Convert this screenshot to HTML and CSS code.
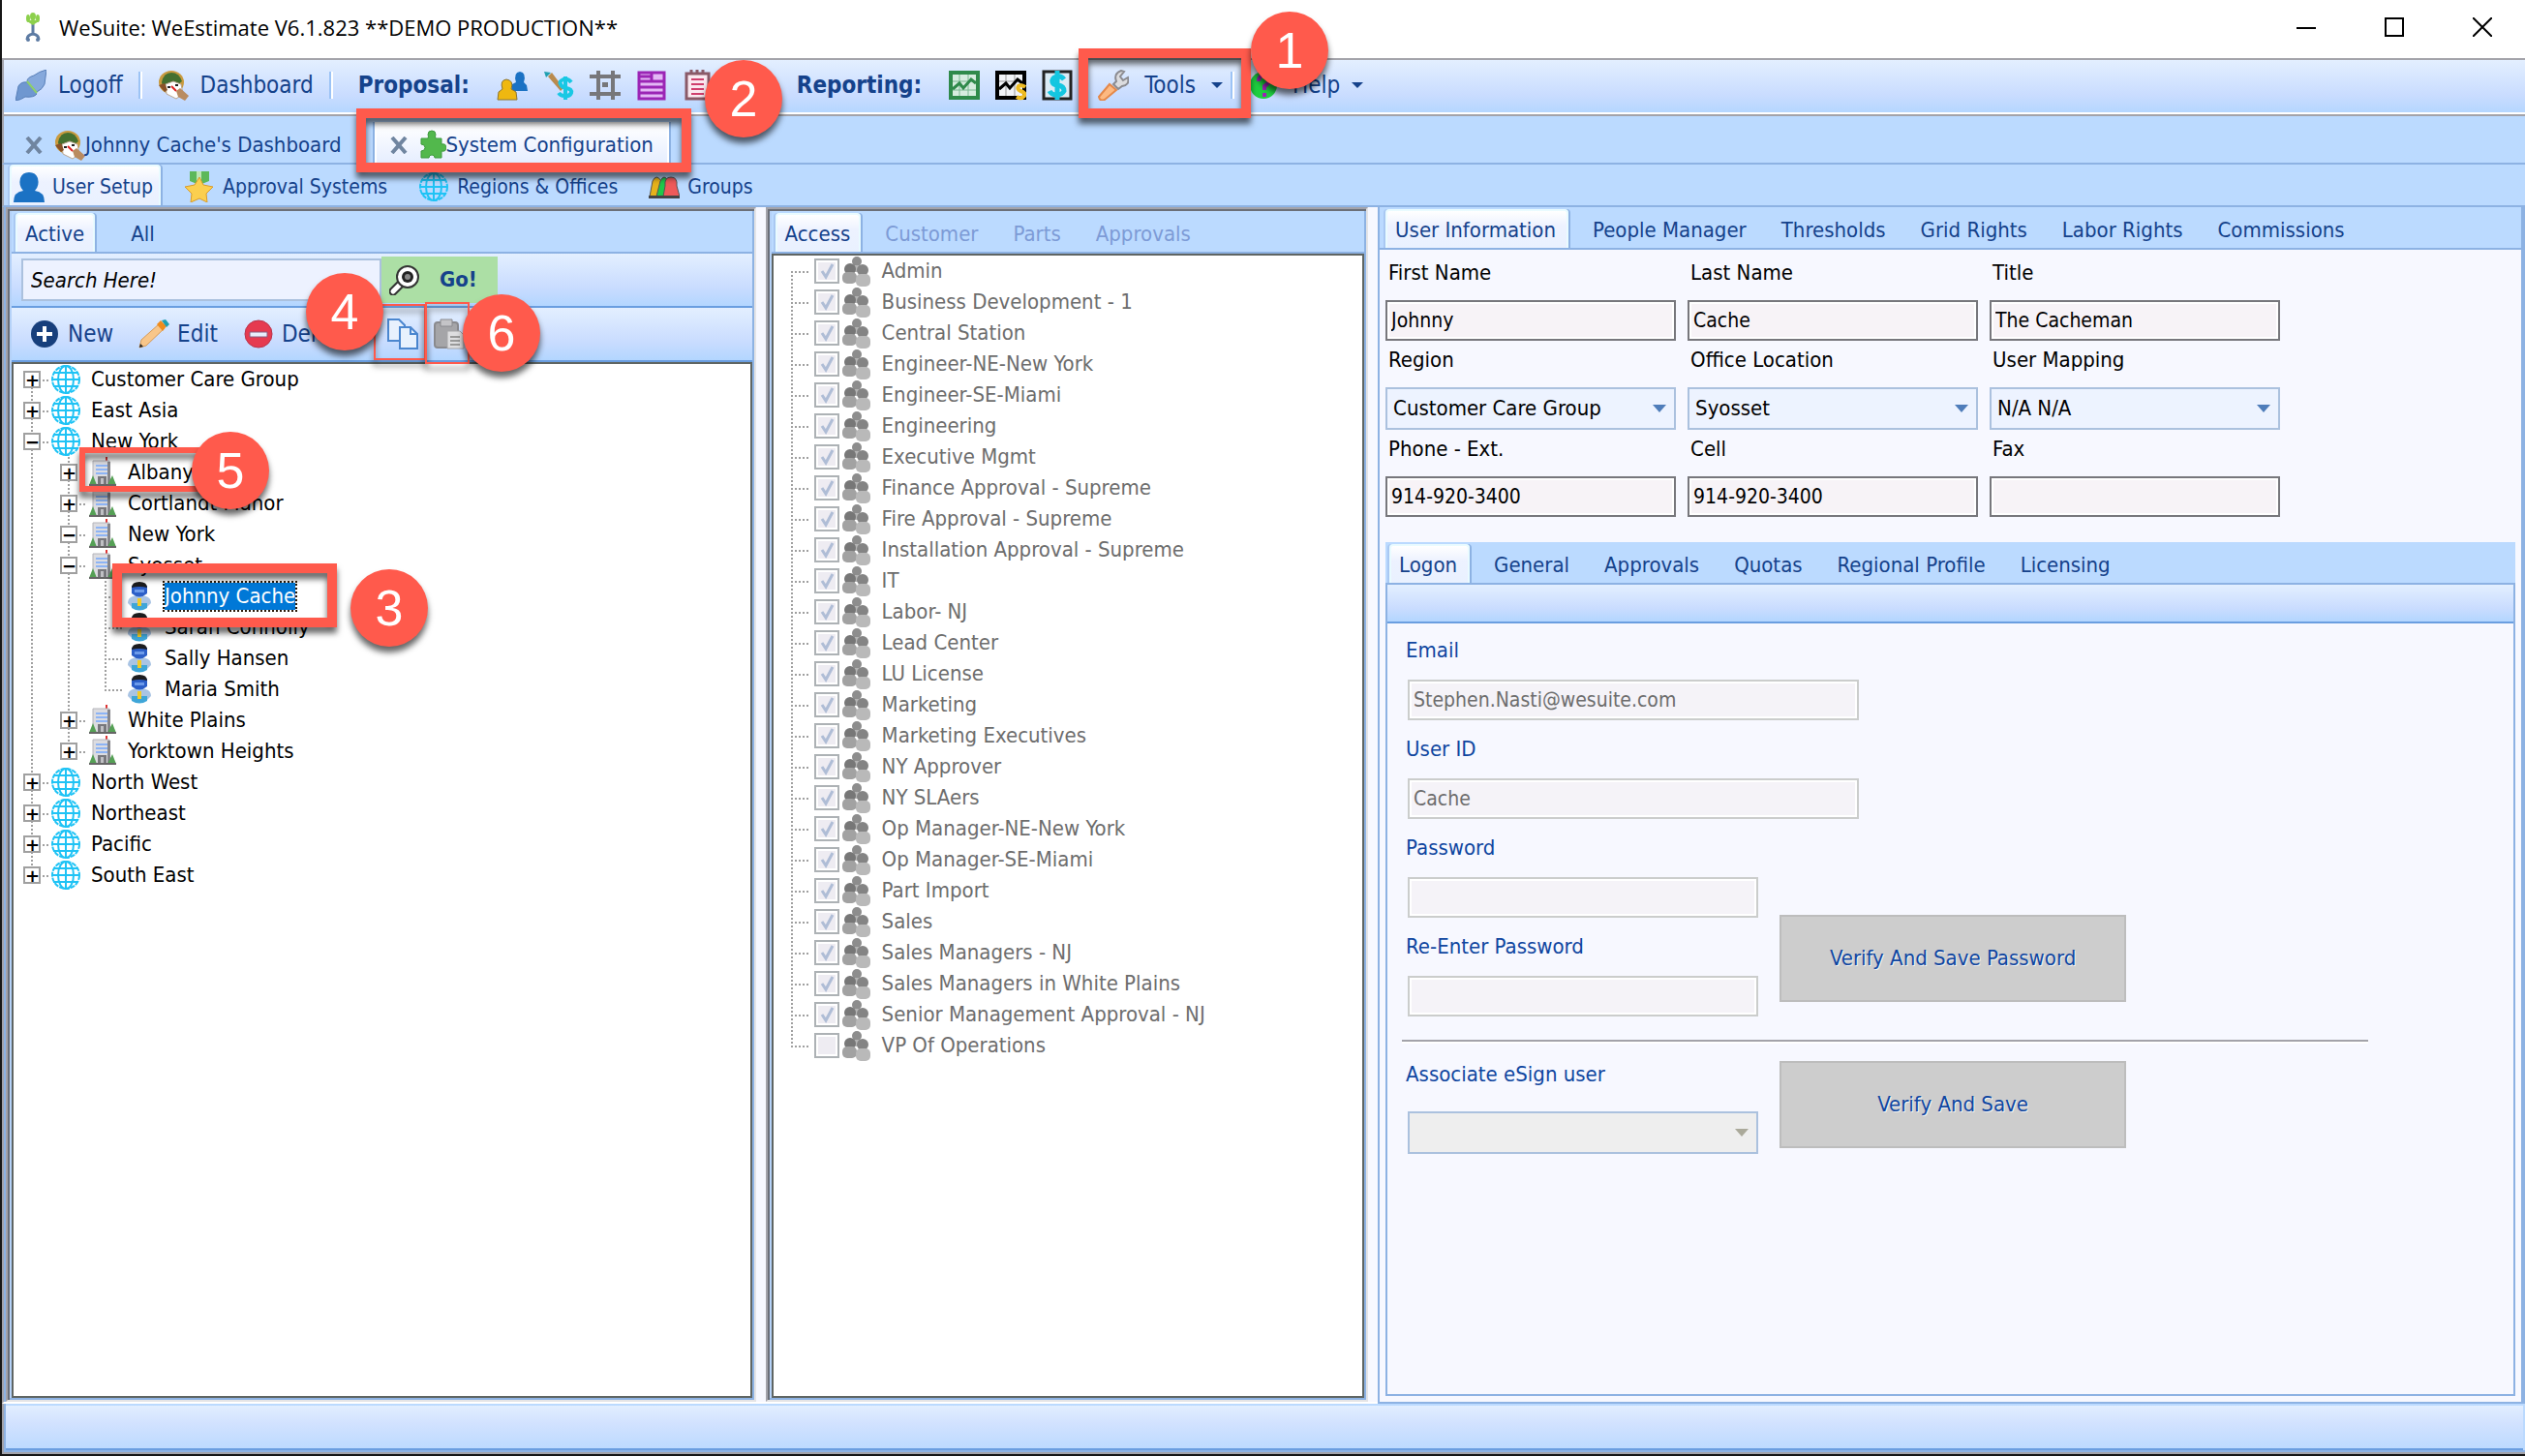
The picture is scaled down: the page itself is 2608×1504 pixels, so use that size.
FILE: index.html
```html
<!DOCTYPE html>
<html lang="en">
<head>
<meta charset="utf-8">
<title>WeSuite: WeEstimate</title>
<link rel="stylesheet" href="styles.css">
</head>
<body>
<svg class="sprite" aria-hidden="true">
  <symbol id="globe" viewBox="0 0 32 32"><g fill="none" stroke="#1fc3f5" stroke-width="2"><circle cx="16" cy="16" r="14" stroke-dasharray="5 1"/><ellipse cx="16" cy="16" rx="8" ry="14"/><path d="M16 2v28M3 9h26M2 16h28M3 23h26"/></g></symbol>
  <symbol id="building" viewBox="0 0 32 32"><path d="M19 0h2v4h-2z" fill="#d33"/><path d="M6 4h17v25H6z" fill="#dcdce0" stroke="#b4b4ba"/><path d="M21 5h3v24h-3z" fill="#85858a"/><path d="M9 8h12v2H9zm0 4h12v2H9zm0 4h12v2H9z" fill="#8db4f5"/><path d="M11 20h9v9h-9z" fill="#77777c"/><path d="M14 22h3v7h-3z" fill="#c0c0c4"/><path d="M2 29l4-10 4 10zM21 29l5-10 4 10z" fill="#55a055"/><path d="M2 28h28v2H2z" fill="#666"/></symbol>
  <symbol id="person" viewBox="0 0 32 32"><path d="M4 23q0-8 12-8t12 8l-4 4H8z" fill="#a9c4e4"/><path d="M8 23h16v5q-8 5-16 0z" fill="#3fa6d8"/><path d="M8 5h16v8q-8 7-16 0z" fill="#2c5fc8"/><path d="M8 7q0-6 8-6t8 6q-8-2-16 0z" fill="#1c1c1e"/><path d="M11 9h10v3H11z" fill="#6d9bea"/><path d="M14 18h4v8h-4z" fill="#f3cb27"/></symbol>
  <symbol id="group" viewBox="0 0 32 32"><circle cx="16" cy="6" r="5" fill="#8d8d8d"/><path d="M10 10h12v7H10z" fill="#b4b4b4"/><circle cx="9" cy="14" r="6" fill="#777"/><circle cx="22" cy="15" r="6" fill="#848484"/><rect x="1" y="17" width="15" height="12" rx="5" fill="#a2a2a2"/><rect x="15" y="19" width="15" height="13" rx="5" fill="#b9b9b9"/></symbol>
  <symbol id="mascot" viewBox="0 0 32 32"><ellipse cx="14" cy="13" rx="13" ry="12" fill="#c99a3e"/><path d="M4 13Q6 3 14 3t11 9l-4 3-16 2z" fill="#44702f"/><path d="M8 15l8-3 8 3 2 10-7 5-10-5z" fill="#fff" stroke="#b9a58f"/><path d="M1 16l6-2 3 7-3 2z" fill="#8a5228"/><path d="M19 22l4-3 9 8-4 5-7-4z" fill="#b98b60"/><path d="M14 17l5 5" stroke="#d22" stroke-width="2"/><path d="M10 18h3M18 16h3" stroke="#222" stroke-width="2"/></symbol>
</svg>

<header class="titlebar">
  <svg class="ico" viewBox="0 0 32 32"><path d="M16 13v11M10 29q0-5 6-6 6 1 6 6" fill="none" stroke="#5d7ba3" stroke-width="3"/><circle cx="11" cy="29" r="2" fill="#5d7ba3"/><circle cx="21" cy="29" r="2" fill="#5d7ba3"/><g fill="#8cd04c"><ellipse cx="11" cy="7" rx="2" ry="4"/><ellipse cx="21" cy="7" rx="2" ry="4"/><ellipse cx="16" cy="5" rx="3" ry="4"/><path d="M10 10l6 4 6-4-6-2z"/></g></svg>
  <h1>WeSuite: WeEstimate V6.1.823 **DEMO PRODUCTION**</h1>
  <div class="winbtns">
    <button aria-label="Minimize"><svg viewBox="0 0 20 20"><path d="M0 11h20" stroke="#000" stroke-width="2"/></svg></button>
    <button aria-label="Maximize"><svg viewBox="0 0 20 20"><path d="M1 1h18v18H1z" fill="none" stroke="#000" stroke-width="2"/></svg></button>
    <button aria-label="Close"><svg viewBox="0 0 20 20"><path d="M0 0l20 20M20 0L0 20" stroke="#000" stroke-width="2"/></svg></button>
  </div>
</header>

<nav class="toolbar">
  <button class="tool"><svg class="ico" viewBox="0 0 32 32"><path d="M0 32l3-15q3-5 9-4l10 12q-3 4-12 3-4 3-10 4z" fill="#6f97d0" stroke="#587fb8"/><path d="M12 12q0-4 7-6 5-4 13-6l-2 15q-2 5-8 8z" fill="#86a9dc" stroke="#587fb8"/><path d="M12 12l10 12" stroke="#8fd06a" stroke-width="2"/></svg>Logoff</button>
  <i class="sep"></i>
  <button class="tool"><svg class="ico"><use href="#mascot"/></svg>Dashboard</button>
  <i class="sep"></i>
  <b class="tool-title">Proposal:</b>
  <div class="icons">
    <button aria-label="Customers"><svg class="ico" viewBox="0 0 32 32"><path d="M15 22l1-7 4-2q-3-10 4-11 7 1 4 11l3 3 1 6z" fill="#1b72c4"/><path d="M1 31l1-8 4-3q-3-9 4-10 8 1 5 10l5 3 1 8z" fill="#efb810" stroke="#8c7430"/></svg></button>
    <button aria-label="Pricing"><svg class="ico" viewBox="0 0 32 32"><path d="M1 2l7 1-5 5z" fill="#1f9fb0"/><path d="M5 7l4-4 12 16-3 3z" fill="#b98b4e"/><path d="M29 13q-3-4-8-3-5 2-3 5 1 3 6 4 6 1 5 5-2 4-7 3-4 0-6-3M23 7v24" fill="none" stroke="#19c8e4" stroke-width="4"/></svg></button>
    <button aria-label="Grid"><svg class="ico" viewBox="0 0 32 32"><path d="M9 1v30M24 1v30M0 7h32M0 25h32" stroke="#77777a" stroke-width="4"/><path d="M13 13h6v5h-6z" fill="#77777a"/></svg></button>
    <button aria-label="Form"><svg class="ico" viewBox="0 0 32 32"><path d="M3 3h26v27H3z" fill="#e3b8f5" stroke="#9b25b5" stroke-width="3"/><path d="M3 12h26M3 18h26M3 24h26M16 3v9M3 7h13" stroke="#9b25b5" stroke-width="3"/></svg></button>
    <button aria-label="Notes"><svg class="ico" viewBox="0 0 32 32"><path d="M4 4h23v26H4z" fill="#fbe9f0" stroke="#8a5a68" stroke-width="3"/><path d="M9 0v5M15 0v5M21 0v5" stroke="#8a5a68" stroke-width="3"/><path d="M9 10h13M9 15h13M9 20h13M9 25h13" stroke="#cf3f6d" stroke-width="2"/></svg></button>
  </div>
  <b class="tool-title reporting">Reporting:</b>
  <div class="icons">
    <button aria-label="Chart"><svg class="ico" viewBox="0 0 32 32"><path d="M2 3h28v26H2z" fill="#d6ecdf" stroke="#2f8a4a" stroke-width="4"/><path d="M4 12h24M4 21h24M11 5v22M20 5v22" stroke="#7cb892"/><path d="M4 20l7-6 4 5 8-9 5 4" fill="none" stroke="#2f8a4a" stroke-width="3"/></svg></button>
    <button aria-label="Sales chart"><svg class="ico" viewBox="0 0 32 32"><path d="M2 3h28v26H2z" fill="#f2f4f8" stroke="#000" stroke-width="4"/><path d="M4 12h24M11 5v22M20 5v22" stroke="#999"/><path d="M4 20l7-6 4 5 8-9 5 4" fill="none" stroke="#000" stroke-width="3"/><path d="M31 18q-4-3-7-1-2 3 2 5 6 2 4 5-3 4-8 1" fill="none" stroke="#eebb22" stroke-width="4"/></svg></button>
    <button aria-label="Revenue"><svg class="ico" viewBox="0 0 32 32"><path d="M2 2h28v28H2z" fill="#dcebf5" stroke="#222" stroke-width="3"/><path d="M23 10q-3-4-8-3-5 2-4 6 1 3 6 3 6 1 6 6-2 4-8 4-5 0-7-4M16 1v30" fill="none" stroke="#14c6e0" stroke-width="5"/></svg></button>
  </div>
  <button class="tool tools"><svg class="ico" viewBox="0 0 32 32"><path d="M16 15l3-3q-3-8 5-11l3 1-4 5 3 4 5-3q2 8-6 9l-4 3z" fill="#dcdcde" stroke="#8b8b90" stroke-width="2"/><path d="M1 28l11-13 7 6-12 10q-5 2-6-3z" fill="#fdb982" stroke="#e4884a" stroke-width="2"/></svg>Tools<i class="arrow"></i></button>
  <i class="sep narrow"></i>
  <button class="tool"><svg class="ico" viewBox="0 0 32 32"><circle cx="14" cy="16" r="14" fill="#1fd040"/><path d="M9 12q0-6 6-6t5 5q-1 4-5 6v4" fill="none" stroke="#9b25b5" stroke-width="4"/><path d="M13 24h4v4h-4z" fill="#9b25b5"/></svg>Help<i class="arrow"></i></button>
</nav>

<nav class="doc-tabs">
  <a class="doc-tab" href="#"><svg class="x" viewBox="0 0 18 18"><path d="M2 1l14 16M16 1L2 17" stroke="#7085a0" stroke-width="4"/></svg><svg class="ico"><use href="#mascot"/></svg>Johnny Cache's Dashboard</a>
  <a class="doc-tab on" href="#"><svg class="x" viewBox="0 0 18 18"><path d="M2 1l14 16M16 1L2 17" stroke="#7085a0" stroke-width="4"/></svg><svg class="ico small" viewBox="0 0 28 32"><path d="M2 9h7q1-2 0-4 0-4 4-4t4 4q-1 2 0 4h6v6q5-1 5 3.500t-5 3.500v7h-7q0-3-3-3t-3 3H2v-7q4 0 4-3.500T2 15z" fill="#52b84c" stroke="#3d9a3c"/></svg>System Configuration</a>
</nav>

<nav class="section-tabs">
  <a class="sec on" href="#"><svg class="ico" viewBox="0 0 32 32"><path d="M0 32q0-11 10-12-5-5-3-13 2-6 9-6t9 6q2 8-3 13 10 1 10 12z" fill="#1b72c4"/></svg>User Setup</a>
  <a class="sec" href="#"><svg class="ico" viewBox="0 0 32 32"><path d="M6 0h20v10l-10 4-10-4z" fill="#5cb85a"/><path d="M13 0h5v10h-5z" fill="#bce6b4"/><path d="M16 6l4 8 10 2-7 7 1 9-8-4-9 4 1-9-7-7 10-2z" fill="#fbcf4f" stroke="#d99b2a"/></svg>Approval Systems</a>
  <a class="sec" href="#"><svg class="ico"><use href="#globe"/></svg>Regions &amp; Offices</a>
  <a class="sec" href="#"><svg class="ico" viewBox="0 0 32 32"><path d="M1 26L4 10q4-8 9 0l3 16z" fill="#e6b21a" stroke="#555"/><path d="M8 26l4-16q4-8 8 0l3 16z" fill="#1fc84a" stroke="#555"/><path d="M15 26l2-11q-1-9 6-9t6 9l3 11z" fill="#ee5a5a" stroke="#555"/><path d="M0 25h32v3H0z" fill="#444"/></svg>Groups</a>
</nav>

<main class="work">
  <section class="pane">
    <nav class="tabs people"><a class="tab on" href="#">Active</a><a class="tab" href="#">All</a></nav>
    <form class="bar search">
      <input class="find" type="text" aria-label="Search" value="Search Here!">
      <button type="button" class="go"><svg class="ico" viewBox="0 0 32 32"><path d="M12 20l-8 8" stroke="#333" stroke-width="9" stroke-linecap="round"/><path d="M12 20l-8 8" stroke="#fff" stroke-width="5" stroke-linecap="round"/><circle cx="19" cy="13" r="11" fill="#fff" stroke="#333" stroke-width="2"/><circle cx="19" cy="13" r="6" fill="#222"/><circle cx="19" cy="13" r="3" fill="#888"/></svg>Go!</button>
    </form>
    <div class="bar edit">
      <button class="act"><svg class="ico" viewBox="0 0 32 32"><circle cx="16" cy="16" r="14" fill="#173f7c"/><path d="M16 8v16M8 16h16" stroke="#fff" stroke-width="4"/></svg>New</button>
      <button class="act"><svg class="ico" viewBox="0 0 32 32"><path d="M1 30l2-8L22 5l5 5L8 28z" fill="#f8c68a" stroke="#d79a55"/><path d="M19 6l4-4 6 6-4 5z" fill="#f08c1c"/><path d="M24 2l4-1 4 5-3 3z" fill="#1f9fb0"/><path d="M1 30l1-4 3 3z" fill="#222"/></svg>Edit</button>
      <button class="act"><svg class="ico" viewBox="0 0 32 32"><circle cx="16" cy="16" r="14" fill="#e63a50" stroke="#b8324a"/><path d="M7 14h18v5H7z" fill="#e8eefc" stroke="#8a5a7c"/></svg>Delete</button>
      <button class="clip copy" aria-label="Copy"><svg class="ico" viewBox="0 0 32 32"><g fill="#e8f1fd" stroke="#4b86cf" stroke-width="2"><path d="M1 1h11l6 6v16H1z"/><path d="M13 9h11l7 7v15H13z"/></g><path d="M24 9v7h7" fill="none" stroke="#4b86cf" stroke-width="2"/></svg></button>
      <button class="clip" aria-label="Paste"><svg class="ico" viewBox="0 0 32 32"><rect x="1" y="4" width="24" height="26" rx="3" fill="#a5a5a8" stroke="#8a8a8e" stroke-width="2"/><path d="M7 1h12v7H7z" fill="#c4c4c7" stroke="#8a8a8e"/><path d="M14 13h13l4 4v14H14z" fill="#dedee0" stroke="#a5a5a8"/><path d="M17 19h10M17 23h10M17 27h10" stroke="#999" stroke-width="2"/></svg></button>
    </div>
    <ul class="tree list">
      <li><i class="node top"><button>+</button></i><svg class="ico"><use href="#globe"/></svg>Customer Care Group</li>
      <li><i class="node"><button>+</button></i><svg class="ico"><use href="#globe"/></svg>East Asia</li>
      <li><i class="node"><button>−</button></i><svg class="ico"><use href="#globe"/></svg>New York</li>
      <li><i class="rail"></i><i class="node"><button>+</button></i><svg class="ico"><use href="#building"/></svg>Albany</li>
      <li><i class="rail"></i><i class="node"><button>+</button></i><svg class="ico"><use href="#building"/></svg>Cortlandt Manor</li>
      <li><i class="rail"></i><i class="node"><button>−</button></i><svg class="ico"><use href="#building"/></svg>New York</li>
      <li><i class="rail"></i><i class="node"><button>−</button></i><svg class="ico"><use href="#building"/></svg>Syosset</li>
      <li><i class="rail"></i><i class="rail"></i><i class="node"></i><svg class="ico"><use href="#person"/></svg><span class="picked">Johnny Cache</span></li>
      <li><i class="rail"></i><i class="rail"></i><i class="node"></i><svg class="ico"><use href="#person"/></svg>Sarah Connolly</li>
      <li><i class="rail"></i><i class="rail"></i><i class="node"></i><svg class="ico"><use href="#person"/></svg>Sally Hansen</li>
      <li><i class="rail"></i><i class="rail"></i><i class="node end"></i><svg class="ico"><use href="#person"/></svg>Maria Smith</li>
      <li><i class="rail"></i><i class="node"><button>+</button></i><svg class="ico"><use href="#building"/></svg>White Plains</li>
      <li><i class="rail"></i><i class="node end"><button>+</button></i><svg class="ico"><use href="#building"/></svg>Yorktown Heights</li>
      <li><i class="node"><button>+</button></i><svg class="ico"><use href="#globe"/></svg>North West</li>
      <li><i class="node"><button>+</button></i><svg class="ico"><use href="#globe"/></svg>Northeast</li>
      <li><i class="node"><button>+</button></i><svg class="ico"><use href="#globe"/></svg>Pacific</li>
      <li><i class="node end"><button>+</button></i><svg class="ico"><use href="#globe"/></svg>South East</li>
    </ul>
  </section>

  <section class="pane">
    <nav class="tabs access"><a class="tab on" href="#">Access</a><a class="tab off" href="#">Customer</a><a class="tab off" href="#">Parts</a><a class="tab off" href="#">Approvals</a></nav>
    <ul class="roles list">
      <li><i class="node top"></i><label><input type="checkbox" checked disabled><svg class="ico"><use href="#group"/></svg>Admin</label></li>
      <li><i class="node"></i><label><input type="checkbox" checked disabled><svg class="ico"><use href="#group"/></svg>Business Development - 1</label></li>
      <li><i class="node"></i><label><input type="checkbox" checked disabled><svg class="ico"><use href="#group"/></svg>Central Station</label></li>
      <li><i class="node"></i><label><input type="checkbox" checked disabled><svg class="ico"><use href="#group"/></svg>Engineer-NE-New York</label></li>
      <li><i class="node"></i><label><input type="checkbox" checked disabled><svg class="ico"><use href="#group"/></svg>Engineer-SE-Miami</label></li>
      <li><i class="node"></i><label><input type="checkbox" checked disabled><svg class="ico"><use href="#group"/></svg>Engineering</label></li>
      <li><i class="node"></i><label><input type="checkbox" checked disabled><svg class="ico"><use href="#group"/></svg>Executive Mgmt</label></li>
      <li><i class="node"></i><label><input type="checkbox" checked disabled><svg class="ico"><use href="#group"/></svg>Finance Approval - Supreme</label></li>
      <li><i class="node"></i><label><input type="checkbox" checked disabled><svg class="ico"><use href="#group"/></svg>Fire Approval - Supreme</label></li>
      <li><i class="node"></i><label><input type="checkbox" checked disabled><svg class="ico"><use href="#group"/></svg>Installation Approval - Supreme</label></li>
      <li><i class="node"></i><label><input type="checkbox" checked disabled><svg class="ico"><use href="#group"/></svg>IT</label></li>
      <li><i class="node"></i><label><input type="checkbox" checked disabled><svg class="ico"><use href="#group"/></svg>Labor- NJ</label></li>
      <li><i class="node"></i><label><input type="checkbox" checked disabled><svg class="ico"><use href="#group"/></svg>Lead Center</label></li>
      <li><i class="node"></i><label><input type="checkbox" checked disabled><svg class="ico"><use href="#group"/></svg>LU License</label></li>
      <li><i class="node"></i><label><input type="checkbox" checked disabled><svg class="ico"><use href="#group"/></svg>Marketing</label></li>
      <li><i class="node"></i><label><input type="checkbox" checked disabled><svg class="ico"><use href="#group"/></svg>Marketing Executives</label></li>
      <li><i class="node"></i><label><input type="checkbox" checked disabled><svg class="ico"><use href="#group"/></svg>NY Approver</label></li>
      <li><i class="node"></i><label><input type="checkbox" checked disabled><svg class="ico"><use href="#group"/></svg>NY SLAers</label></li>
      <li><i class="node"></i><label><input type="checkbox" checked disabled><svg class="ico"><use href="#group"/></svg>Op Manager-NE-New York</label></li>
      <li><i class="node"></i><label><input type="checkbox" checked disabled><svg class="ico"><use href="#group"/></svg>Op Manager-SE-Miami</label></li>
      <li><i class="node"></i><label><input type="checkbox" checked disabled><svg class="ico"><use href="#group"/></svg>Part Import</label></li>
      <li><i class="node"></i><label><input type="checkbox" checked disabled><svg class="ico"><use href="#group"/></svg>Sales</label></li>
      <li><i class="node"></i><label><input type="checkbox" checked disabled><svg class="ico"><use href="#group"/></svg>Sales Managers - NJ</label></li>
      <li><i class="node"></i><label><input type="checkbox" checked disabled><svg class="ico"><use href="#group"/></svg>Sales Managers in White Plains</label></li>
      <li><i class="node"></i><label><input type="checkbox" checked disabled><svg class="ico"><use href="#group"/></svg>Senior Management Approval - NJ</label></li>
      <li><i class="node end"></i><label><input type="checkbox" disabled><svg class="ico"><use href="#group"/></svg>VP Of Operations</label></li>
    </ul>
  </section>

  <section class="detail">
    <nav class="tabs info"><a class="tab on" href="#">User Information</a><a class="tab" href="#">People Manager</a><a class="tab" href="#">Thresholds</a><a class="tab" href="#">Grid Rights</a><a class="tab" href="#">Labor Rights</a><a class="tab" href="#">Commissions</a></nav>
    <form class="fields">
      <div class="field"><label for="first">First Name</label><input id="first" type="text" value="Johnny"></div>
      <div class="field"><label for="last">Last Name</label><input id="last" type="text" value="Cache"></div>
      <div class="field"><label for="title">Title</label><input id="title" type="text" value="The Cacheman"></div>
      <div class="field"><label for="region">Region</label><select id="region"><option>Customer Care Group</option></select></div>
      <div class="field"><label for="office">Office Location</label><select id="office"><option>Syosset</option></select></div>
      <div class="field"><label for="map">User Mapping</label><select id="map"><option>N/A N/A</option></select></div>
      <div class="field"><label for="phone">Phone - Ext.</label><input id="phone" type="text" value="914-920-3400"></div>
      <div class="field"><label for="cell">Cell</label><input id="cell" type="text" value="914-920-3400"></div>
      <div class="field"><label for="fax">Fax</label><input id="fax" type="text"></div>
    </form>
    <section class="account">
      <nav class="tabs info"><a class="tab on" href="#">Logon</a><a class="tab" href="#">General</a><a class="tab" href="#">Approvals</a><a class="tab" href="#">Quotas</a><a class="tab" href="#">Regional Profile</a><a class="tab" href="#">Licensing</a></nav>
      <div class="account-body">
        <div class="bar blank"></div>
        <form class="logon">
          <div class="field wide"><label for="email">Email</label><input id="email" type="text" value="Stephen.Nasti@wesuite.com" disabled></div>
          <div class="field wide"><label for="uid">User ID</label><input id="uid" type="text" value="Cache" disabled></div>
          <div class="pair">
            <div class="col">
              <div class="field"><label for="pw">Password</label><input id="pw" type="password" disabled></div>
              <div class="field"><label for="pw2">Re-Enter Password</label><input id="pw2" type="password" disabled></div>
            </div>
            <button type="button" class="verify low">Verify And Save Password</button>
          </div>
          <hr>
          <div class="pair">
            <div class="col"><div class="field esign"><label for="esign">Associate eSign user</label><select id="esign" disabled><option></option></select></div></div>
            <button type="button" class="verify">Verify And Save</button>
          </div>
        </form>
      </div>
    </section>
  </section>
</main>

<footer class="status"></footer>

<div class="box b1"></div><div class="box b2"></div><div class="box b3"></div>
<div class="box thin b4"></div><div class="box thin b6"></div><div class="box mid b5"></div>
<div class="dot d1">1</div><div class="dot d2">2</div><div class="dot d3">3</div>
<div class="dot d4">4</div><div class="dot d5">5</div><div class="dot d6">6</div>
</body>
</html>
```

FILE: styles.css
```css
:root {
  --ink: #15428b;
  --line: #8db2e3;
  --strip: #bbdaff;
  --edge: #5f6563;
  --grey: #a3a3aa;
  --pale: #f7f8ff;
  --mark: #ff5a4c;
  --bar: linear-gradient(#e3efff, #c9dcff 65%, #b3d6ff);
}
* { box-sizing: border-box; }
body {
  margin: 0;
  min-height: 100vh;
  position: relative;
  display: flex;
  flex-direction: column;
  border-left: 2px solid #161616;
  border-bottom: 2px solid #161616;
  background: #fff;
  color: #000;
  font: 22px/28px "DejaVu Sans Condensed", "DejaVu Sans", sans-serif;
}
button, input, select { font: inherit; color: inherit; margin: 0; }
button { background: none; border: 0; padding: 0; }
a { color: inherit; text-decoration: none; }
i { font-style: normal; }
.sprite { position: absolute; width: 0; height: 0; }
.ico { width: 32px; height: 32px; flex: none; display: block; }

.titlebar { height: 60px; display: flex; align-items: center; padding: 0 34px 4px 16px; gap: 11px; }
.titlebar h1 { margin: 0; flex: 1; font: 22px/32px "Open Sans", sans-serif; }
.winbtns { display: flex; gap: 71px; }
.winbtns svg { display: block; width: 20px; height: 20px; }

.toolbar {
  height: 60px;
  display: flex;
  align-items: center;
  padding: 0 12px 4px;
  border-top: 2px solid var(--grey);
  border-left: 2px solid var(--grey);
  border-bottom: 2px solid var(--grey);
  background: linear-gradient(#fff, #fff) bottom / 100% 2px no-repeat, var(--bar);
  color: var(--ink);
  font-size: 24px;
}
.tool { display: flex; align-items: center; gap: 12px; }
.sep { width: 4px; height: 28px; margin: 0 16px; border-left: 2px solid #9cc3f5; border-right: 2px solid #fff; }
.sep.narrow { margin: 0 16px 0 8px; }
.tool-title { margin: 0 28px 0 10px; }
.tool-title.reporting { margin-left: 86px; }
.icons { display: flex; gap: 16px; }
.tools { margin-left: 26px; gap: 16px; }
.arrow { border: 6px solid transparent; border-top-color: var(--ink); border-bottom: 0; }

.doc-tabs, .section-tabs {
  display: flex;
  background: var(--strip);
  border-left: 2px solid var(--grey);
  border-bottom: 2px solid var(--line);
  color: var(--ink);
}
.doc-tabs { height: 50px; padding: 6px 0 0 8px; gap: 20px; }
.doc-tab { display: flex; align-items: center; padding: 6px 14px 0; height: 42px; }
.doc-tab.on { padding-top: 4px; background: linear-gradient(#fff, #e6eeff); border: 2px solid #fff; border-bottom: 0; box-shadow: 2px 0 0 var(--line), -2px 0 0 var(--line); }
.doc-tab .x { width: 18px; height: 18px; margin-right: 12px; }
.ico.small { width: 28px; }
.section-tabs { height: 44px; padding-left: 6px; font-size: 21px; gap: 24px; }
.sec { display: flex; align-items: center; gap: 8px; padding: 4px 8px 0 0; }
.sec.on, .tab.on {
  background: linear-gradient(#fff, #edf2ff 40%, #e9f1ff);
  border: 2px solid #e9fbff;
  border-bottom: 0;
  border-radius: 4px 4px 0 0;
  box-shadow: 2px 0 0 var(--line), -2px 0 0 #a9c8f2;
}
.sec.on { padding: 2px 6px 0 2px; }

.work {
  flex: 1;
  display: grid;
  grid-template-columns: 774fr 622fr 1184fr;
  gap: 10px;
  background: var(--pale);
  border-left: 2px solid var(--grey);
  box-shadow: inset 2px 0 0 var(--line);
  border-bottom: 2px solid #fff;
  padding-left: 2px;
}
.pane {
  display: flex;
  flex-direction: column;
  border: 2px solid var(--grey);
  border-right-color: #e4e4e6;
  border-bottom-color: #e4e4e6;
  box-shadow: inset 2px 2px 0 #6b6f78, inset -2px -2px 0 var(--line);
  padding: 2px 2px 2px 4px;
  background: #b5d2f8;
}
.tabs {
  display: flex;
  height: 44px;
  padding: 2px 4px 0;
  background: var(--strip);
  border-bottom: 2px solid var(--line);
  color: var(--ink);
}
.tab { padding: 8px 18px 0; }
.tab.on { padding: 6px 9px 0 8px; margin-right: 7px; }
.people .tab:nth-child(2) { padding-left: 30px; }
.access .tab:nth-child(2) { padding-left: 18px; }
.tab.off { color: #7d9bd6; }
.bar { background: var(--bar); border-bottom: 2px solid #6a9ee0; color: var(--ink); display: flex; }
.search { height: 56px; padding: 4px 10px; align-items: center; }
.find { width: 372px; height: 44px; padding: 0 8px; border: 2px solid #abc1de; background: #edf2ff; color: #000; font-style: italic; }
.go { display: flex; align-items: center; gap: 20px; width: 120px; height: 48px; padding-left: 8px; background: #acdfa5; font-weight: bold; }
.edit { height: 56px; padding-left: 18px; align-items: center; font-size: 24px; }
.act { display: flex; align-items: center; gap: 8px; margin-right: 26px; }
.clip { margin-right: 16px; }
.copy { margin-left: 12px; }

.list { list-style: none; margin: 0; padding: 0 0 0 10px; flex: 1; border: 2px solid var(--edge); background: #fff; }
.list li, .list label { display: flex; align-items: center; height: 32px; white-space: nowrap; }
.list .ico { margin-right: 10px; }
.node, .rail {
  --v: repeating-linear-gradient(#a0a0a0 0 2px, #fff 2px 4px);
  --h: repeating-linear-gradient(90deg, #a0a0a0 0 2px, #fff 2px 4px);
  flex: none;
  height: 32px;
  display: flex;
  align-items: center;
}
.rail { width: 38px; background: var(--v) 8px 0 / 2px 32px no-repeat; }
.node { width: 28px; background: var(--v) 8px 0 / 2px 32px no-repeat, var(--h) 8px 16px / 18px 2px no-repeat; }
.node.top { background: var(--v) 8px 16px / 2px 16px no-repeat, var(--h) 8px 16px / 18px 2px no-repeat; }
.node.end { background: var(--v) 8px 0 / 2px 16px no-repeat, var(--h) 8px 16px / 18px 2px no-repeat; }
.node button { width: 18px; height: 18px; border: 2px solid #a0a0a0; background: #fff; color: #000; font: bold 18px/13px "DejaVu Sans", sans-serif; overflow: hidden; }
.picked { background: #0078d7; color: #fff; outline: 2px dotted #2b1a08; line-height: 28px; }
.roles { color: #6d6d6d; }
.roles .node { width: 32px; }
.roles input {
  appearance: none;
  width: 26px;
  height: 26px;
  margin-right: 2px;
  border: 2px solid #adb2b5;
  background: #eeecf2;
  box-shadow: inset 0 0 0 2px #fff;
}
.roles input:checked { background: #eeecf2 url("data:image/svg+xml,%3Csvg xmlns='http://www.w3.org/2000/svg' viewBox='0 0 22 22'%3E%3Cpath d='M6 11l4 6 7-13' fill='none' stroke='%23afbdd6' stroke-width='3'/%3E%3C/svg%3E"); }

.detail { display: flex; flex-direction: column; border: solid var(--line); border-width: 0 4px 2px 2px; margin-bottom: -2px; }
.detail .tabs { padding-left: 6px; }
.info .tab.on { padding: 6px 11px 0 8px; }
.info .tab:nth-child(2) { padding-left: 18px; }
.fields { display: grid; grid-template-columns: repeat(3, 300px); gap: 6px 12px; padding: 10px 6px 26px; }
.field { display: flex; flex-direction: column; gap: 14px; }
.field label { padding-left: 3px; }
.field input, .field select { height: 44px; width: 100%; border: 2px solid #77777c; font-size: 21px; padding: 0 4px; border-radius: 0; }
.field input { height: 42px; background: #f7f3f7; box-shadow: inset 0 0 0 2px #fff; }
.field select {
  appearance: none;
  padding: 0 6px;
  font-size: 22px;
  border-color: #abc1de;
  background: #edf3ff url("data:image/svg+xml,%3Csvg xmlns='http://www.w3.org/2000/svg' viewBox='0 0 14 8'%3E%3Cpath d='M0 0h14L7 8z' fill='%234f7dba'/%3E%3C/svg%3E") right 8px center / 14px 8px no-repeat;
}
.account { flex: 1; display: flex; flex-direction: column; margin: 0 6px 6px; }
.account .tabs { padding-left: 4px; }
.account-body { flex: 1; border: 2px solid var(--line); border-top: 0; }
.blank { height: 40px; }
.logon { padding: 14px 21px; color: var(--ink); }
.logon .field { gap: 16px; margin-bottom: 16px; }
.logon .field label { margin-left: -5px; color: #0f46a0; }
.logon .field input { border-color: #cbcdcc; background: #f5f3f8; color: #6d6d6d; }
.field.wide { max-width: 466px; }
.pair { display: flex; gap: 22px; align-items: flex-start; }
.col { width: 362px; }
.verify { width: 358px; height: 90px; border: 2px solid #bdbdbd; background: #cdcdcd; color: #0f46a0; text-shadow: 1px 1px 0 #f4f4f4; }
.verify.low { margin-top: 83px; }
.logon hr { height: 4px; max-width: 998px; margin: 8px 0 18px -6px; border: 0; border-top: 2px solid var(--grey); background: #fff; }
.logon .esign { gap: 24px; }
.logon .esign select { opacity: 1; background-color: #eee; background-image: url("data:image/svg+xml,%3Csvg xmlns='http://www.w3.org/2000/svg' viewBox='0 0 14 8'%3E%3Cpath d='M0 0h14L7 8z' fill='%23aaa99a'/%3E%3C/svg%3E"); }

.status {
  height: 52px;
  border-left: 2px solid var(--grey);
  border-bottom: 2px solid var(--grey);
  background: linear-gradient(#e3efff, #d2e2ff 40%, #b9d9ff);
  box-shadow: inset 2px -2px 0 var(--line), inset -2px 2px 0 var(--strip), inset 0 -4px 0 #6a9ee0;
}

.box, .dot { position: absolute; filter: drop-shadow(0 6px 3px rgba(0, 0, 0, 0.6)); pointer-events: none; }
.box { border: 10px solid var(--mark); }
.box.thin { border-width: 2px; }
.box.mid { border-width: 6px; }
.dot { width: 80px; height: 80px; border-radius: 50%; background: var(--mark); color: #fff; text-align: center; font: 52px/80px "Liberation Sans", sans-serif; }
.b1 { left: 1112px; top: 50px; width: 178px; height: 72px; }
.b2 { left: 366px; top: 112px; width: 346px; height: 66px; }
.b3 { left: 114px; top: 582px; width: 232px; height: 66px; }
.b4 { left: 384px; top: 314px; width: 54px; height: 58px; }
.b6 { left: 437px; top: 312px; width: 46px; height: 64px; }
.b5 { left: 80px; top: 462px; width: 130px; height: 46px; }
.d1 { left: 1290px; top: 12px; }
.d2 { left: 726px; top: 62px; }
.d3 { left: 360px; top: 588px; }
.d4 { left: 314px; top: 282px; }
.d5 { left: 196px; top: 446px; }
.d6 { left: 476px; top: 304px; }
```
